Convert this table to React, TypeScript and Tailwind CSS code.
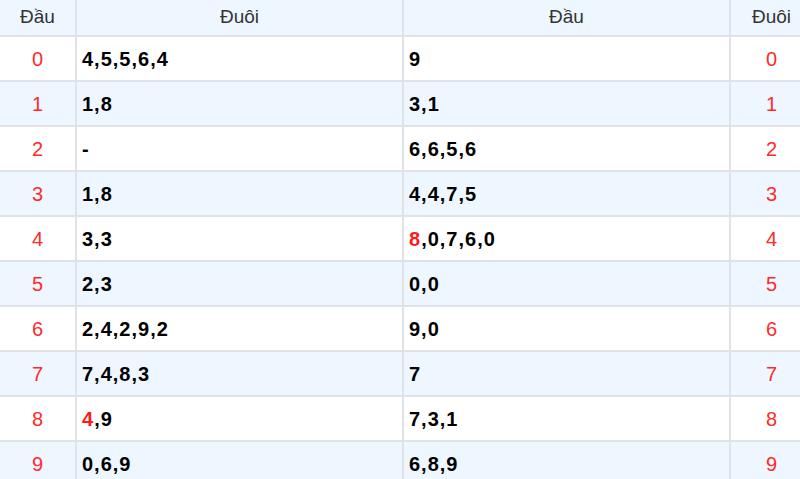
import React from "react";

type Part = { t: string; red?: boolean };
const rows: { d: number; a: Part[]; b: Part[] }[] = [
  { d: 0, a: [{ t: "4,5,5,6,4" }], b: [{ t: "9" }] },
  { d: 1, a: [{ t: "1,8" }], b: [{ t: "3,1" }] },
  { d: 2, a: [{ t: "-" }], b: [{ t: "6,6,5,6" }] },
  { d: 3, a: [{ t: "1,8" }], b: [{ t: "4,4,7,5" }] },
  { d: 4, a: [{ t: "3,3" }], b: [{ t: "8", red: true }, { t: ",0,7,6,0" }] },
  { d: 5, a: [{ t: "2,3" }], b: [{ t: "0,0" }] },
  { d: 6, a: [{ t: "2,4,2,9,2" }], b: [{ t: "9,0" }] },
  { d: 7, a: [{ t: "7,4,8,3" }], b: [{ t: "7" }] },
  { d: 8, a: [{ t: "4", red: true }, { t: ",9" }], b: [{ t: "7,3,1" }] },
  { d: 9, a: [{ t: "0,6,9" }], b: [{ t: "6,8,9" }] },
];

function Val({ parts }: { parts: Part[] }) {
  return (
    <span className="text-[20px] font-bold tracking-[1px] text-black">
      {parts.map((p, i) => (
        <span key={i} className={p.red ? "text-[#ff1a1a]" : ""}>
          {p.t}
        </span>
      ))}
    </span>
  );
}

export default function App() {
  return (
    <div
      className="w-[800px] h-[479px] overflow-hidden bg-white"
      style={{ fontFamily: '"Liberation Sans", Arial, sans-serif' }}
    >
      <div className="w-[812px]">
        <div className="grid grid-cols-[77px_327px_327px_81px] h-[37px] bg-[#eef6ff] border-b-2 border-[#dfe3e8] text-[#333] text-[19px]">
          <div className="flex items-center justify-center border-r-2 border-[#dfe3e8]">Đầu</div>
          <div className="flex items-center justify-center border-r-2 border-[#dfe3e8]">Đuôi</div>
          <div className="flex items-center justify-center border-r-2 border-[#dfe3e8]">Đầu</div>
          <div className="flex items-center justify-center">Đuôi</div>
        </div>
        {rows.map((r, i) => (
          <div
            key={r.d}
            className={`grid grid-cols-[77px_327px_327px_81px] h-[45px] border-b-2 border-[#dfe3e8] ${
              i % 2 === 1 ? "bg-[#eef6ff]" : "bg-white"
            }`}
          >
            <div className="flex items-center justify-center border-r-2 border-[#dfe3e8] text-[#ff2a2a] text-[20px]">
              {r.d}
            </div>
            <div className="flex items-center pl-[5px] border-r-2 border-[#dfe3e8]">
              <Val parts={r.a} />
            </div>
            <div className="flex items-center pl-[5px] border-r-2 border-[#dfe3e8]">
              <Val parts={r.b} />
            </div>
            <div className="flex items-center justify-center text-[#ff2a2a] text-[20px]">
              {r.d}
            </div>
          </div>
        ))}
      </div>
    </div>
  );
}
